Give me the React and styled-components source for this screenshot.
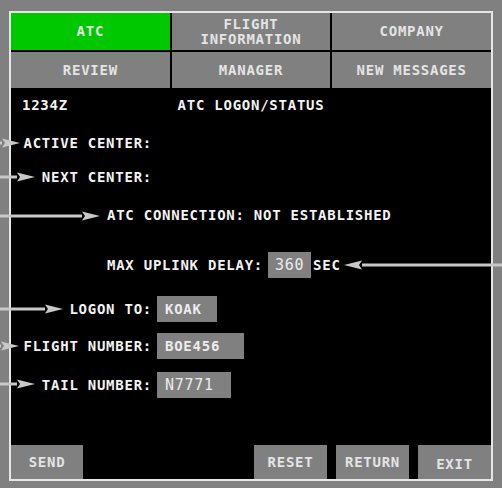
import React from "react";
import styled, { createGlobalStyle } from "styled-components";

const GlobalStyle = createGlobalStyle`
  html, body {
    margin: 0;
    padding: 0;
    background: #808080;
  }
  * {
    box-sizing: border-box;
  }
`;

const Page = styled.div`
  position: relative;
  width: 502px;
  height: 488px;
  padding: 11px 0 0 9px;
  background: #808080;
  font-family: "DejaVu Sans Mono", "Liberation Mono", monospace;
  font-weight: bold;
  font-size: 14px;
  letter-spacing: 0.75px;
  overflow: hidden;
`;

const Frame = styled.div`
  width: 484px;
  height: 470px;
  border: 2px solid #e6e6e6;
  background: #000;
  display: flex;
  flex-direction: column;
`;

const TabGrid = styled.div`
  display: grid;
  grid-template-columns: repeat(3, 1fr);
  grid-template-rows: 37px 36px;
  gap: 2px;
  background: #000;
`;

const Tab = styled.div`
  display: flex;
  align-items: center;
  justify-content: center;
  text-align: center;
  line-height: 15px;
  background: ${(p) => (p.$active ? "#00c800" : "#808080")};
  color: #e4e4e4;
`;

const Content = styled.div`
  flex: 1;
  display: flex;
  flex-direction: column;
  color: #f2f2f2;
`;

const Row = styled.div`
  height: ${(p) => p.$h}px;
  display: flex;
  align-items: center;
  padding-left: ${(p) => p.$indent || 0}px;
`;

const Header = styled.div`
  height: 34px;
  display: grid;
  grid-template-columns: 1fr auto 1fr;
  align-items: center;
  padding: 0 11px;
`;

const FieldRow = styled.div`
  height: ${(p) => p.$h}px;
  display: grid;
  grid-template-columns: 141px auto;
  column-gap: 5px;
  align-items: center;
  justify-items: start;
`;

const Label = styled.span`
  justify-self: end;
  white-space: pre;
`;

const ValueBox = styled.div`
  width: ${(p) => p.$w}px;
  height: 26px;
  display: flex;
  align-items: center;
  justify-content: ${(p) => (p.$center ? "center" : "flex-start")};
  padding-left: ${(p) => (p.$center ? 0 : 8)}px;
  background: #808080;
  color: #ececec;
  font-weight: ${(p) => (p.$light ? "normal" : "bold")};
  font-size: ${(p) => (p.$light ? 15 : 14)}px;
`;

const Spacer = styled.div`
  flex: 1;
`;

const ButtonBar = styled.div`
  height: 34px;
  display: flex;
  justify-content: space-between;
`;

const ButtonGroup = styled.div`
  display: flex;
  gap: 9px;
`;

const Button = styled.div`
  width: ${(p) => p.$w}px;
  height: 34px;
  display: flex;
  align-items: center;
  justify-content: center;
  padding-top: ${(p) => p.$drop || 0}px;
  background: #808080;
  color: #e4e4e4;
`;

const Overlay = styled.svg`
  position: absolute;
  top: 0;
  left: 0;
  pointer-events: none;
`;

const arrows = [
  { from: 0, tip: 20, y: 143 },
  { from: 0, tip: 35, y: 177 },
  { from: 0, tip: 100, y: 216 },
  { from: 502, tip: 344, y: 265 },
  { from: 0, tip: 63, y: 309 },
  { from: 0, tip: 19, y: 346 },
  { from: 0, tip: 35, y: 384 },
];

function Arrows() {
  return (
    <Overlay width="502" height="488" viewBox="0 0 502 488">
      {arrows.map(({ from, tip, y }) => {
        const dir = from < tip ? -1 : 1;
        const back = tip + dir * 18;
        return (
          <g key={y} fill="#c8c8c8" stroke="none">
            <rect
              x={Math.min(from, back)}
              y={y - 1.5}
              width={Math.abs(back - from)}
              height="3"
            />
            <polygon
              points={`${tip},${y} ${back},${y - 4.5} ${back - dir * 3},${y} ${back},${y + 4.5}`}
            />
          </g>
        );
      })}
    </Overlay>
  );
}

export default function App() {
  return (
    <>
      <GlobalStyle />
      <Page>
        <Frame>
          <TabGrid>
            <Tab $active>ATC</Tab>
            <Tab>
              FLIGHT
              <br />
              INFORMATION
            </Tab>
            <Tab>COMPANY</Tab>
            <Tab>REVIEW</Tab>
            <Tab>MANAGER</Tab>
            <Tab>NEW MESSAGES</Tab>
          </TabGrid>
          <Content>
            <Header>
              <span>1234Z</span>
              <span>ATC LOGON/STATUS</span>
              <span />
            </Header>
            <FieldRow $h={42}>
              <Label>ACTIVE CENTER:</Label>
            </FieldRow>
            <FieldRow $h={26}>
              <Label>NEXT CENTER:</Label>
            </FieldRow>
            <Row $h={50} $indent={96}>
              ATC CONNECTION: NOT ESTABLISHED
            </Row>
            <Row $h={50} $indent={96}>
              <span>MAX UPLINK DELAY:</span>
              <ValueBox $w={43} $center $light style={{ marginLeft: 5, marginRight: 2 }}>
                360
              </ValueBox>
              <span>SEC</span>
            </Row>
            <FieldRow $h={37}>
              <Label>LOGON TO:</Label>
              <ValueBox $w={60}>KOAK</ValueBox>
            </FieldRow>
            <FieldRow $h={38}>
              <Label>FLIGHT NUMBER:</Label>
              <ValueBox $w={87}>BOE456</ValueBox>
            </FieldRow>
            <FieldRow $h={40}>
              <Label>TAIL NUMBER:</Label>
              <ValueBox $w={74} $light>N7771</ValueBox>
            </FieldRow>
            <Spacer />
            <ButtonBar>
              <Button $w={72}>SEND</Button>
              <ButtonGroup>
                <Button $w={73}>RESET</Button>
                <Button $w={73}>RETURN</Button>
                <Button $w={73} $drop={4}>EXIT</Button>
              </ButtonGroup>
            </ButtonBar>
          </Content>
        </Frame>
        <Arrows />
      </Page>
    </>
  );
}
